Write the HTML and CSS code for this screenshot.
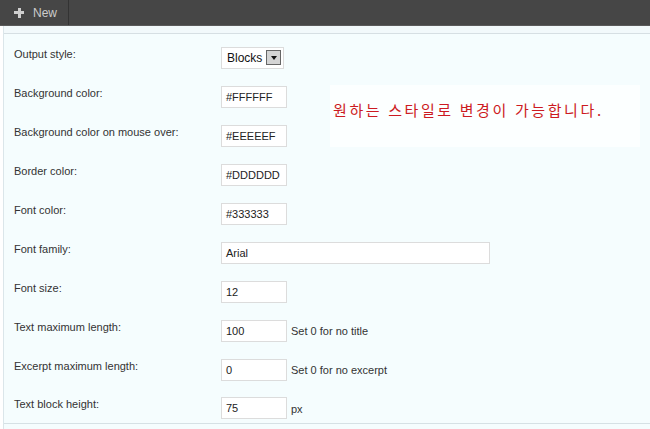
FILE: index.html
```html
<!DOCTYPE html>
<html>
<head>
<meta charset="utf-8">
<link rel="stylesheet" href="styles.css">
</head>
<body>
<div class="topbar">
  <div class="newbtn"><span class="plus"></span><span class="newtxt">New</span></div>
</div>
<div class="panel">
  <div class="strip"></div>
  <div class="row"><div class="label">Output style:</div><div class="field"><div class="select"><span>Blocks</span><span class="arrow"><span class="tri"></span></span></div></div></div>
  <div class="row"><div class="label">Background color:</div><div class="field"><div class="input">#FFFFFF</div></div></div>
  <div class="row"><div class="label">Background color on mouse over:</div><div class="field"><div class="input">#EEEEEF</div></div></div>
  <div class="row"><div class="label">Border color:</div><div class="field"><div class="input">#DDDDDD</div></div></div>
  <div class="row"><div class="label">Font color:</div><div class="field"><div class="input">#333333</div></div></div>
  <div class="row"><div class="label">Font family:</div><div class="field"><div class="input wide">Arial</div></div></div>
  <div class="row"><div class="label">Font size:</div><div class="field"><div class="input">12</div></div></div>
  <div class="row"><div class="label">Text maximum length:</div><div class="field"><div class="input">100</div><span class="hint">Set 0 for no title</span></div></div>
  <div class="row"><div class="label">Excerpt maximum length:</div><div class="field"><div class="input">0</div><span class="hint">Set 0 for no excerpt</span></div></div>
  <div class="row last"><div class="label">Text block height:</div><div class="field"><div class="input">75</div><span class="hint">px</span></div></div>
  <div class="note">원하는 스타일로 변경이 가능합니다.</div>
</div>
</body>
</html>
```
FILE: styles.css
```css
* { box-sizing: border-box; }
html, body { margin: 0; padding: 0; }
body {
  width: 650px;
  height: 429px;
  overflow: hidden;
  background: #ffffff;
  font-family: "Liberation Sans", Arial, sans-serif;
  font-size: 11px;
  color: #333333;
  position: relative;
}
.topbar {
  height: 26px;
  background: #464646;
  border-bottom: 1px solid #5a5a5a;
  display: flex;
}
.newbtn {
  width: 69px;
  border-right: 1px solid #333;
  display: flex;
  align-items: center;
  padding-left: 14px;
  gap: 9px;
  color: #cccccc;
  font-size: 12px;
}
.plus {
  width: 10px;
  height: 10px;
  position: relative;
  display: inline-block;
}
.plus::before, .plus::after {
  content: "";
  position: absolute;
  background: #cfcfcf;
}
.plus::before { left: 0; top: 3.5px; width: 10px; height: 3px; }
.plus::after { left: 3.5px; top: 0; width: 3px; height: 10px; }
.newtxt { padding-top: 1px; }
.panel {
  margin-left: 3px;
  border-left: 1px solid #dbe6ea;
  background: #f5fdfe;
  height: 403px;
}
.strip {
  height: 8px;
  background: #f2f9fb;
  border-bottom: 1px solid #d6dfe3;
}
.row {
  height: 39px;
  display: flex;
  align-items: center;
}
.row.last { border-bottom: 1px solid #d6e1e5; }
.label {
  width: 217px;
  padding-left: 10px;
  color: #333;
}
.field {
  display: flex;
  align-items: center;
  gap: 4px;
  margin-top: 8px;
}
.input {
  width: 66px;
  height: 22px;
  background: #ffffff;
  border: 1px solid #dcdcdc;
  padding: 4px 0 0 4px;
  color: #222;
}
.input.wide { width: 269px; }
.hint { color: #333; padding-top: 1px; }
.select {
  width: 63px;
  height: 22px;
  background: #fff;
  border: 1px solid #dcdcdc;
  display: flex;
  align-items: center;
  justify-content: space-between;
  padding: 0 2px 0 5px;
  color: #111;
  font-size: 12px;
}
.arrow {
  width: 15px;
  height: 15px;
  background: #d4d4d4;
  border: 1px solid #666;
  display: flex;
  align-items: center;
  justify-content: center;
}
.tri {
  width: 0; height: 0;
  border-left: 3.5px solid transparent;
  border-right: 3.5px solid transparent;
  border-top: 4px solid #111;
}
.note {
  position: absolute;
  left: 330px;
  top: 85px;
  width: 310px;
  height: 62px;
  background: #fcffff;
  color: #cc1a22;
  font-family: "Noto Sans CJK KR", sans-serif;
  font-size: 15px;
  letter-spacing: 2.6px;
  padding: 15px 0 0 3px;
  line-height: 20px;
}
```
